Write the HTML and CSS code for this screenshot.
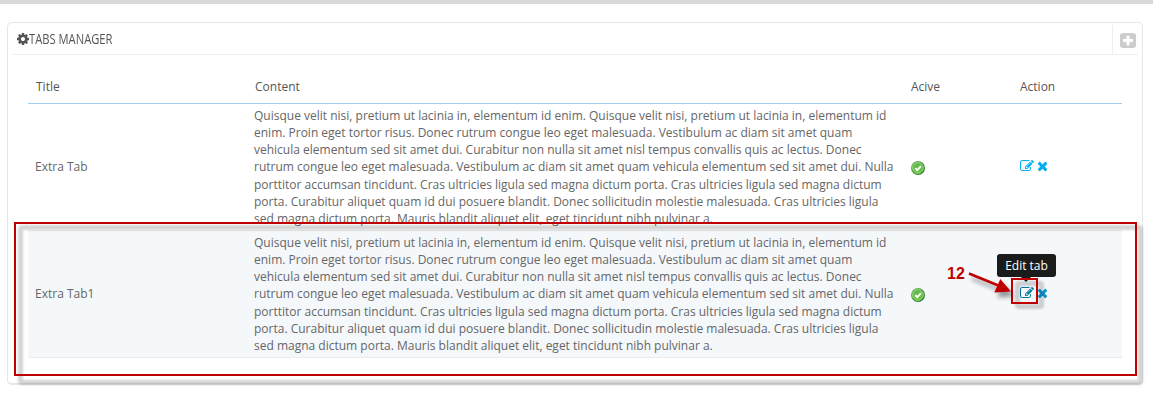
FILE: index.html
```html
<!DOCTYPE html>
<html lang="en">
<head>
<meta charset="utf-8">
<title>Tabs Manager</title>
<link rel="stylesheet" href="styles.css">
</head>
<body>
<svg class="defs" aria-hidden="true">
  <defs>
    <linearGradient id="ring" x1="0" y1="0" x2="1" y2="1"><stop offset="0" stop-color="#7cc46a"/><stop offset="1" stop-color="#1d6a12"/></linearGradient>
    <linearGradient id="disc" x1="0" y1="0" x2="0" y2="1"><stop offset="0" stop-color="#62b552"/><stop offset="1" stop-color="#6cc93f"/></linearGradient>
    <symbol id="edit" viewBox="0 0 1792 1792"><path d="M888 1184l116-116-152-152-116 116v56h96v96h56zm440-720q-16-16-33 1l-350 350q-17 17-1 33t33-1l350-350q17-17 1-33zm80 594v190q0 119-84.500 203.500t-203.500 84.500h-832q-119 0-203.500-84.500t-84.500-203.500v-832q0-119 84.500-203.500t203.500-84.500h832q63 0 117 25 15 7 18 23 3 17-9 29l-49 49q-14 14-32 8-23-6-45-6h-832q-66 0-113 47t-47 113v832q0 66 47 113t113 47h832q66 0 113-47t47-113v-126q0-13 9-22l64-64q15-15 35-7t20 29zm-96-738l288 288-672 672h-288v-288zm444 132l-92 92-288-288 92-92q28-28 68-28t68 28l152 152q28 28 28 68t-28 68z"/></symbol>
    <symbol id="remove" viewBox="302 0 1188 1792"><path d="M1490 1322q0 40-28 68l-136 136q-28 28-68 28t-68-28l-294-294-294 294q-28 28-68 28t-68-28l-136-136q-28-28-28-68t28-68l294-294-294-294q-28-28-28-68t28-68l136-136q28-28 68-28t68 28l294 294 294-294q28-28 68-28t68 28l136 136q28 28 28 68t-28 68l-294 294 294 294q28 28 28 68z"/></symbol>
    <symbol id="check" viewBox="0 0 14 14"><circle cx="7" cy="7" r="7" fill="url(#ring)"/><circle cx="7" cy="7" r="5.400" fill="url(#disc)" stroke="#a5dc92" stroke-width=".8"/><path d="M4.200 7.100l2.100 2 3.600-3.900" fill="none" stroke="#fff" stroke-width="1.800"/></symbol>
  </defs>
</svg>
<div class="topbar"></div>
<main class="panel">
  <header class="panel-heading">
    <svg class="cog" viewBox="128 128 1536 1536"><path d="M1152 896q0-106-75-181t-181-75-181 75-75 181 75 181 181 75 181-75 75-181zm512-109v222q0 12-8 23t-20 13l-185 28q-19 54-39 91 35 50 107 138 10 12 10 25t-9 23q-27 37-99 108t-94 71q-12 0-26-9l-138-108q-44 23-91 38-16 136-29 186-7 28-36 28h-222q-14 0-24.500-8.500t-11.500-21.500l-28-184q-49-16-90-37l-141 107q-10 9-25 9-14 0-25-11-126-114-165-168-7-10-7-23 0-12 8-23 15-21 51-66.500t54-70.500q-27-50-41-99l-183-27q-13-2-21-12.500t-8-23.500v-222q0-12 8-23t19-13l186-28q14-46 39-92-40-57-107-138-10-12-10-24 0-10 9-23 26-36 98.500-107.500t94.500-71.500q13 0 26 10l138 107q44-23 91-38 16-136 29-186 7-28 36-28h222q14 0 24.500 8.500t11.500 21.500l28 184q49 16 90 37l142-107q9-9 24-9 13 0 25 10 129 119 165 170 7 8 7 22 0 12-8 23-15 21-51 66.500t-54 70.500q26 50 41 98l183 28q13 2 21 12.500t8 23.500z"/></svg>
    <h1 class="panel-title">TABS MANAGER</h1>
    <div class="add">
      <svg class="plus" viewBox="0 0 16 15"><rect width="16" height="15" rx="3" fill="#ccc"/><path d="M8 2.800v9.600M3 7.600h10" stroke="#fff" stroke-width="3"/></svg>
    </div>
  </header>
  <div class="table">
    <div class="row head">
      <div>Title</div><div>Content</div><div>Acive</div><div>Action</div>
    </div>
    <div class="row">
      <div>Extra Tab</div>
      <div class="content">Quisque velit nisi, pretium ut lacinia in, elementum id enim. Quisque velit nisi, pretium ut lacinia in, elementum id<br>enim. Proin eget tortor risus. Donec rutrum congue leo eget malesuada. Vestibulum ac diam sit amet quam<br>vehicula elementum sed sit amet dui. Curabitur non nulla sit amet nisl tempus convallis quis ac lectus. Donec<br>rutrum congue leo eget malesuada. Vestibulum ac diam sit amet quam vehicula elementum sed sit amet dui. Nulla<br>porttitor accumsan tincidunt. Cras ultricies ligula sed magna dictum porta. Cras ultricies ligula sed magna dictum<br>porta. Curabitur aliquet quam id dui posuere blandit. Donec sollicitudin molestie malesuada. Cras ultricies ligula<br>sed magna dictum porta. Mauris blandit aliquet elit, eget tincidunt nibh pulvinar a.</div>
      <div><svg class="check"><use href="#check"/></svg></div>
      <div class="actions"><svg class="edit"><use href="#edit"/></svg><svg class="remove"><use href="#remove"/></svg></div>
    </div>
    <div class="row selected">
      <div>Extra Tab1</div>
      <div class="content">Quisque velit nisi, pretium ut lacinia in, elementum id enim. Quisque velit nisi, pretium ut lacinia in, elementum id<br>enim. Proin eget tortor risus. Donec rutrum congue leo eget malesuada. Vestibulum ac diam sit amet quam<br>vehicula elementum sed sit amet dui. Curabitur non nulla sit amet nisl tempus convallis quis ac lectus. Donec<br>rutrum congue leo eget malesuada. Vestibulum ac diam sit amet quam vehicula elementum sed sit amet dui. Nulla<br>porttitor accumsan tincidunt. Cras ultricies ligula sed magna dictum porta. Cras ultricies ligula sed magna dictum<br>porta. Curabitur aliquet quam id dui posuere blandit. Donec sollicitudin molestie malesuada. Cras ultricies ligula<br>sed magna dictum porta. Mauris blandit aliquet elit, eget tincidunt nibh pulvinar a.</div>
      <div><svg class="check"><use href="#check"/></svg></div>
      <div class="actions"><svg class="edit hovered"><use href="#edit"/></svg><svg class="remove"><use href="#remove"/></svg></div>
    </div>
  </div>
</main>
<div class="tooltip">Edit tab</div>
<div class="mark-shadow row-shadow"></div>
<div class="mark row-mark"></div>
<div class="mark-shadow icon-shadow"></div>
<div class="mark icon-mark"></div>
<span class="step">12</span>
<svg class="arrow" viewBox="0 0 56 40"><path d="M5 8.500L38 22" stroke="#c00000" stroke-width="2.600"/><path d="M47 26.500L36.300 14 30.300 27.500z" fill="#c00000"/></svg>
</body>
</html>
```
FILE: styles.css
```css
* { box-sizing: border-box; }
body {
  margin: 0;
  height: 408px;
  overflow: hidden;
  position: relative;
  background: #fff;
  color: #666;
  font: 12px/17.14px "Open Sans", sans-serif;
}
svg { display: block; }
.defs { position: absolute; width: 0; height: 0; }
.topbar { height: 4px; background: #d9d9d9; }
.panel {
  margin: 18px 10px 0 7px;
  height: 363px;
  padding: 2px 4px 0;
  border: 1px solid #e6e6e6;
  border-bottom-width: 2px;
  border-radius: 5px;
}
.panel-heading {
  display: flex;
  align-items: center;
  height: 30px;
  padding-left: 5px;
  border-bottom: 1px solid #eee;
}
.cog { width: 12px; height: 12px; margin-bottom: 2px; fill: #555; }
.panel-title {
  margin: 0 0 2px;
  color: #555;
  font: 500 14px/20px "Ubuntu Condensed", "Open Sans", sans-serif;
  white-space: nowrap;
  transform: scaleX(.8);
  transform-origin: left;
}
.add {
  display: flex;
  align-items: center;
  align-self: stretch;
  width: 26px;
  margin-left: auto;
  padding: 1px 0 0 7px;
  border-left: 1px solid #eee;
}
.plus { width: 16px; height: 15px; }
.table { margin: 15px 16px 0; }
.row {
  display: grid;
  grid-template-columns: 219px 657px 109px 109px;
  align-items: center;
  height: 127px;
  border-bottom: 1px solid #eaedef;
}
.row > div { padding: 0 7px; white-space: nowrap; }
.row.head { height: 34px; color: #555; border-color: #a0d0eb; }
.row.head > div:nth-child(-n+2) { padding-left: 8px; }
.selected { background: #f4f8fb; }
.check { width: 14px; height: 14px; margin-top: 2px; }
.actions { display: flex; gap: 3px; margin-bottom: 3px; fill: #00aff0; }
.edit { width: 14px; height: 14px; }
.remove { width: 11px; height: 14px; }
.selected .actions { fill: #0c9bd5; }
.selected .hovered { fill: #0077a4; }
.tooltip {
  position: absolute;
  left: 997px;
  top: 254px;
  width: 59px;
  height: 23px;
  border-radius: 3px;
  background: #1a1c1c;
  color: #fff;
  line-height: 23px;
  text-align: center;
}
.tooltip::after {
  content: "";
  position: absolute;
  left: 24px;
  top: 23px;
  border: 5px solid transparent;
  border-top-color: #1a1c1c;
  border-bottom: 0;
}
.mark { position: absolute; border: 2px solid #c00000; }
.mark-shadow { position: absolute; border: 5px solid rgba(0, 0, 0, .17); border-radius: 4px; filter: blur(1.2px); }
.row-mark { left: 14px; top: 222px; width: 1123px; height: 154px; }
.row-shadow { left: 18px; top: 225px; width: 1125px; height: 160px; }
.icon-mark { left: 1011px; top: 278px; width: 27px; height: 26px; }
.icon-shadow { left: 1015px; top: 281px; width: 29px; height: 28px; }
.step {
  position: absolute;
  left: 947px;
  top: 264px;
  color: #c00000;
  font: bold 16px/20px "Liberation Sans", Arial, sans-serif;
}
.arrow {
  position: absolute;
  left: 964px;
  top: 265px;
  width: 56px;
  height: 40px;
  filter: drop-shadow(3px 5px 2px rgba(0, 0, 0, .4));
}
```
